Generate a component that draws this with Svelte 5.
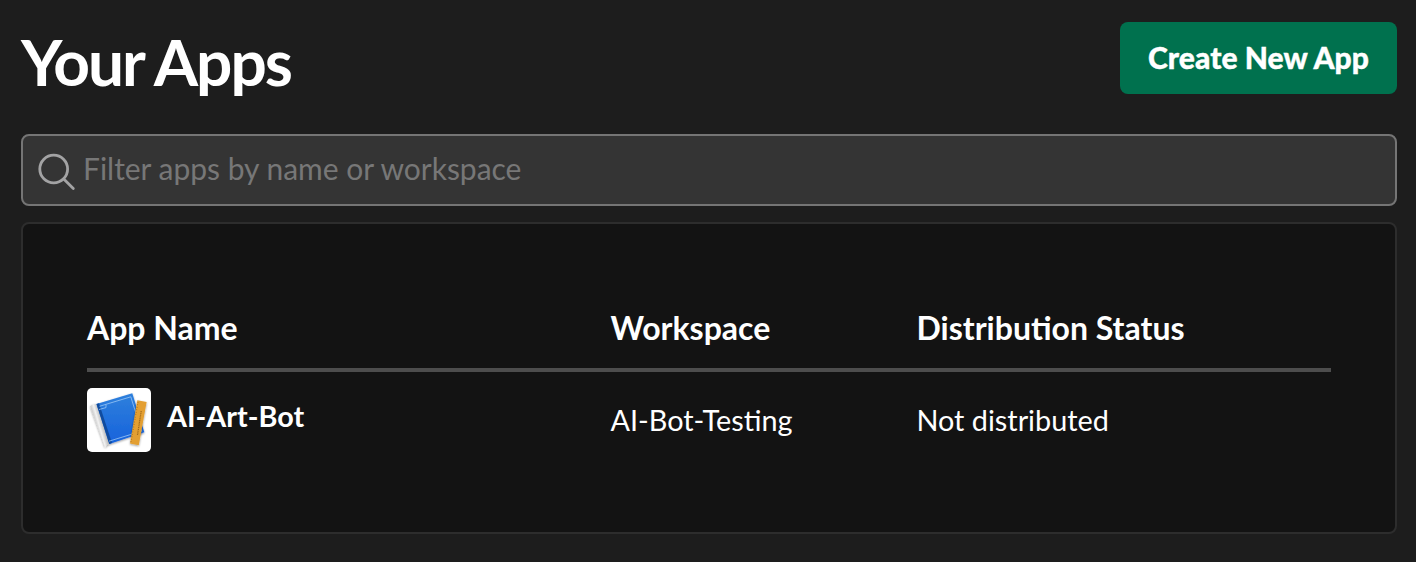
<script>
  const apps = [{ name: 'AI-Art-Bot', workspace: 'AI-Bot-Testing', status: 'Not distributed' }];
</script>

<main>
  <header>
    <h1>Your Apps</h1>
    <button>Create New App</button>
  </header>
  <label class="filter">
    <svg width="38" height="38" viewBox="0 0 38 38" fill="none" stroke="#a3a3a4" stroke-width="2.8" stroke-linecap="round">
      <circle cx="15.7" cy="16" r="13.9" /><path d="M26 26.3 35.3 35.5" />
    </svg>
    <input placeholder="Filter apps by name or workspace" />
  </label>
  <section>
    <div class="row head"><span>App Name</span><span>Workspace</span><span>Distribution Status</span></div>
    {#each apps as app}
      <div class="row body">
        <div class="app">
          <span class="icon">
            <svg width="64" height="64" viewBox="0 0 64 64">
              <defs>
                <linearGradient id="blue" x2="0" y2="1"><stop stop-color="#2e80dc" /><stop offset="1" stop-color="#1762dc" /></linearGradient>
                <linearGradient id="spine" gradientUnits="userSpaceOnUse" x1="9" y1="38" x2="16" y2="36"><stop stop-color="#c9c9c9" /><stop offset=".45" stop-color="#f2f2f2" /><stop offset="1" stop-color="#bcbcbc" /></linearGradient>
                <filter id="shadow" x="-20%" y="-20%" width="140%" height="140%"><feDropShadow dx="0" dy="1" stdDeviation="1" flood-opacity=".4" /></filter>
              </defs>
              <g filter="url(#shadow)">
                <path d="M3.2 18.2Q5 16 9.5 16L23 56Q20 56 18 59.2Z" fill="url(#spine)" />
                <path d="M9.5 16 45.3 5.3 57.3 44.3 22.3 56Z" fill="url(#blue)" />
              </g>
              <path d="M9.5 16 12 15.3 25 55.1 22.3 56Z" fill="#104b9e" />
              <path d="M12.5 18.3 43.8 8.8 54.5 43.2 22 53.2M12 21.5 19 19.6V16.6" fill="none" stroke="#9bc7f5" stroke-width=".8" />
              <g filter="url(#shadow)">
                <path d="M50.3 12.2 59.6 14 51.8 57.2 43 55.4Z" fill="#e39f31" />
              </g>
              <path d="M51 14 44 54" stroke="#a86e1d" stroke-width="1.2" stroke-dasharray=".7 1.8" />
              <path d="M54.2 23 50.5 47" stroke="#9e691c" stroke-width="1.2" stroke-dasharray="1.2 .6" />
            </svg>
          </span>
          <strong>{app.name}</strong>
        </div>
        <span>{app.workspace}</span><span>{app.status}</span>
      </div>
    {/each}
  </section>
</main>

<style>
  :global(body) { background: #1d1d1d; }
  main { box-sizing: border-box; height: 562px; padding: 22px 19px 28px 21px; font-family: Lato, sans-serif; color: #fff; display: flex; flex-direction: column; }
  header { display: flex; justify-content: space-between; height: 112px; }
  h1 { margin: 2px 0 0; font-size: 64px; line-height: 76px; font-weight: 700; letter-spacing: -2.05px; }
  button { width: 277px; height: 72px; padding: 0 0 2px; border: 0; border-radius: 8px; background: #00714e; color: #fff; font: 900 30px Lato, sans-serif; letter-spacing: .08px; -webkit-text-stroke: .4px #fff; }
  .filter { box-sizing: border-box; height: 72px; border: 2px solid #757575; border-radius: 8px; background: #343434; display: flex; align-items: center; padding-left: 15px; gap: 7px; }
  .filter svg { margin-top: 4px; }
  input { flex: 1; border: 0; outline: 0; padding: 0 0 4px; background: transparent; color: #fff; font: 30px Lato, sans-serif; letter-spacing: -.02px; }
  input::placeholder { color: #777; }
  section { box-sizing: border-box; height: 312px; margin-top: 16px; padding: 80px 64px; border: 2px solid #2d2d2d; border-radius: 8px; background: #131313; }
  .row { display: grid; grid-template-columns: 523.5px 306px 1fr; }
  .head { height: 64px; border-bottom: 4px solid #4d4d4d; font-size: 32px; line-height: 47px; font-weight: 700; }
  .body { padding-top: 16px; font-size: 28.8px; line-height: 64px; }
  .app { display: flex; gap: 16px; }
  .icon { width: 64px; height: 64px; background: white; border-radius: 5px; overflow: hidden; }
  .icon svg { display: block; }
  strong { line-height: 56px; }
</style>
